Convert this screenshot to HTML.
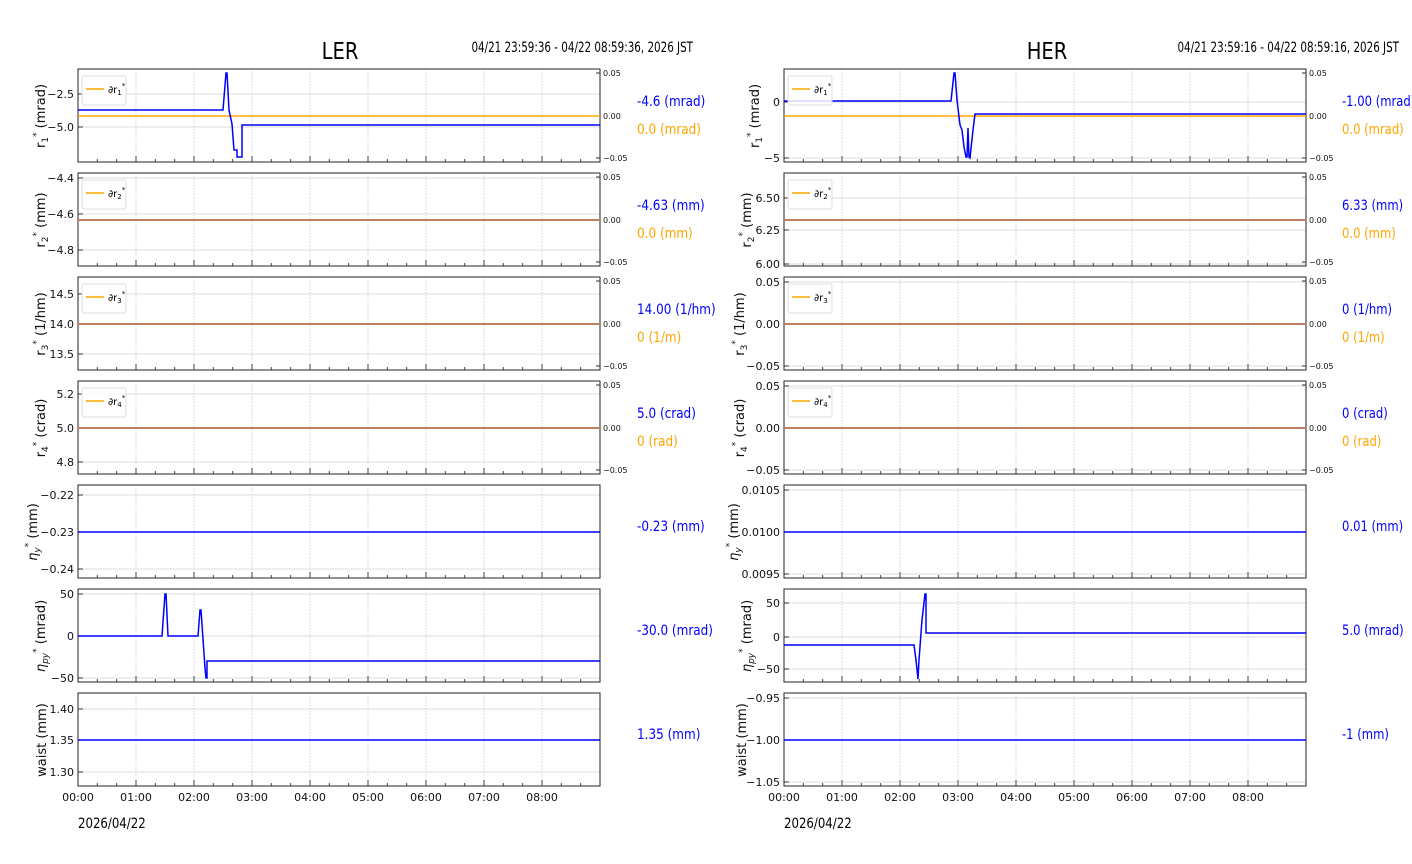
<!DOCTYPE html>
<html><head><meta charset="utf-8"><style>
html,body{margin:0;padding:0;background:#fff;}
svg{display:block;font-family:"DejaVu Sans","Liberation Sans",sans-serif;}
.t{font-size:11px;fill:#111;}
.r{font-size:8px;fill:#111;}
.yl{font-size:13px;fill:#111;}
.v{font-size:14.5px;}
</style></head><body>
<svg width="1412" height="864" viewBox="0 0 1412 864" xmlns="http://www.w3.org/2000/svg">
<defs>
<g id="p">
 <g stroke="#c8c8c8" stroke-width="0.8" stroke-dasharray="1.5,1.5">
  <line x1="58" y1="0" x2="58" y2="93"/><line x1="116" y1="0" x2="116" y2="93"/><line x1="174" y1="0" x2="174" y2="93"/><line x1="232" y1="0" x2="232" y2="93"/><line x1="290" y1="0" x2="290" y2="93"/><line x1="348" y1="0" x2="348" y2="93"/><line x1="406" y1="0" x2="406" y2="93"/><line x1="464" y1="0" x2="464" y2="93"/>
 </g>
 <g stroke="#444" stroke-width="1">
  <path d="M58 93v-6M116 93v-6M174 93v-6M232 93v-6M290 93v-6M348 93v-6M406 93v-6M464 93v-6M19.3 93v-3M38.7 93v-3M77.3 93v-3M96.7 93v-3M135.3 93v-3M154.7 93v-3M193.3 93v-3M212.7 93v-3M251.3 93v-3M270.7 93v-3M309.3 93v-3M328.7 93v-3M367.3 93v-3M386.7 93v-3M425.3 93v-3M444.7 93v-3M483.3 93v-3M502.7 93v-3"/>
 </g>
 <rect x="0" y="0" width="522" height="93" fill="none" stroke="#222" stroke-width="1"/>
</g>
<g id="hg"><line x1="0" y1="0" x2="522" y2="0" stroke="#d0d0d0" stroke-width="0.8"/><line x1="0" y1="0" x2="5" y2="0" stroke="#333"/></g>
<g id="rax"><line x1="0" y1="4" x2="-4" y2="4" stroke="#333"/><line x1="0" y1="47" x2="-4" y2="47" stroke="#333"/><line x1="0" y1="89" x2="-4" y2="89" stroke="#333"/>
 <text class="r" x="3" y="7">0.05</text><text class="r" x="3" y="50">0.00</text><text class="r" x="3" y="92">−0.05</text></g>
<g id="leg"><rect x="0" y="0" width="44" height="29" rx="2" fill="#fff" fill-opacity="0.85" stroke="#ddd"/><line x1="4" y1="13" x2="22" y2="13" stroke="#ffa500" stroke-width="1.5"/></g>
</defs>

<text transform="translate(340,59) scale(0.85,1)" text-anchor="middle" font-size="23">LER</text>
<text transform="translate(693,52) scale(0.74,1)" text-anchor="end" font-size="14">04/21 23:59:36 - 04/22 08:59:36, 2026 JST</text>
<text transform="translate(1047,59) scale(0.85,1)" text-anchor="middle" font-size="23">HER</text>
<text transform="translate(1399,52) scale(0.74,1)" text-anchor="end" font-size="14">04/21 23:59:16 - 04/22 08:59:16, 2026 JST</text>

<!-- LEFT -->
<g>
<use href="#hg" x="78" y="94"/><use href="#hg" x="78" y="127"/>
<use href="#hg" x="78" y="178"/><use href="#hg" x="78" y="214"/><use href="#hg" x="78" y="250"/>
<use href="#hg" x="78" y="294"/><use href="#hg" x="78" y="324"/><use href="#hg" x="78" y="354"/>
<use href="#hg" x="78" y="394"/><use href="#hg" x="78" y="428"/><use href="#hg" x="78" y="462"/>
<use href="#hg" x="78" y="495"/><use href="#hg" x="78" y="532"/><use href="#hg" x="78" y="569"/>
<use href="#hg" x="78" y="594"/><use href="#hg" x="78" y="636"/><use href="#hg" x="78" y="678"/>
<use href="#hg" x="78" y="709"/><use href="#hg" x="78" y="740"/><use href="#hg" x="78" y="772"/>
<use href="#p" x="78" y="69"/><use href="#p" x="78" y="173"/><use href="#p" x="78" y="277"/><use href="#p" x="78" y="381"/><use href="#p" x="78" y="485"/><use href="#p" x="78" y="589"/><use href="#p" x="78" y="693"/>
<use href="#rax" x="600" y="69"/><use href="#rax" x="600" y="173"/><use href="#rax" x="600" y="277"/><use href="#rax" x="600" y="381"/>
<g class="t" text-anchor="end">
<text x="74" y="98">−2.5</text><text x="74" y="131">−5.0</text>
<text x="74" y="182">−4.4</text><text x="74" y="218">−4.6</text><text x="74" y="254">−4.8</text>
<text x="74" y="298">14.5</text><text x="74" y="328">14.0</text><text x="74" y="358">13.5</text>
<text x="74" y="398">5.2</text><text x="74" y="432">5.0</text><text x="74" y="466">4.8</text>
<text x="74" y="499">−0.22</text><text x="74" y="536">−0.23</text><text x="74" y="573">−0.24</text>
<text x="74" y="598">50</text><text x="74" y="640">0</text><text x="74" y="682">−50</text>
<text x="74" y="713">1.40</text><text x="74" y="744">1.35</text><text x="74" y="776">1.30</text>
</g>
<line x1="78" y1="116" x2="600" y2="116" stroke="#ffa500" stroke-width="1.5"/>
<polyline fill="none" stroke="#0000ff" stroke-width="1.5" points="78,110 223,110 226,73 227,73 229,110 232,124 234,150 237,150 237,157 242,157 242,125 600,125"/>
<line x1="78" y1="220" x2="600" y2="220" stroke="#c08060" stroke-width="2"/>
<line x1="78" y1="324" x2="600" y2="324" stroke="#c08060" stroke-width="2"/>
<line x1="78" y1="428" x2="600" y2="428" stroke="#c08060" stroke-width="2"/>
<line x1="78" y1="532" x2="600" y2="532" stroke="#0000ff" stroke-width="1.5"/>
<polyline fill="none" stroke="#0000ff" stroke-width="1.5" points="78,636 162,636 165,594 166,594 168,636 198,636 200,610 201,610 205,668 206,678 207,678 207,661 600,661"/>
<line x1="78" y1="740" x2="600" y2="740" stroke="#0000ff" stroke-width="1.5"/>
<use href="#leg" x="82" y="76"/><use href="#leg" x="82" y="180"/><use href="#leg" x="82" y="284"/><use href="#leg" x="82" y="388"/>
<g font-size="10"><text x="108" y="93">∂r<tspan font-size="7" dy="2">1</tspan><tspan font-size="7" dy="-7">*</tspan></text>
<text x="108" y="197">∂r<tspan font-size="7" dy="2">2</tspan><tspan font-size="7" dy="-7">*</tspan></text>
<text x="108" y="301">∂r<tspan font-size="7" dy="2">3</tspan><tspan font-size="7" dy="-7">*</tspan></text>
<text x="108" y="405">∂r<tspan font-size="7" dy="2">4</tspan><tspan font-size="7" dy="-7">*</tspan></text></g>
<g class="yl" text-anchor="middle">
<text transform="translate(45,116) rotate(-90)">r<tspan font-size="9" dy="3">1</tspan><tspan font-size="9" dy="-9">*</tspan><tspan dy="6"> (mrad)</tspan></text>
<text transform="translate(45,220) rotate(-90)">r<tspan font-size="9" dy="3">2</tspan><tspan font-size="9" dy="-9">*</tspan><tspan dy="6"> (mm)</tspan></text>
<text transform="translate(45,324) rotate(-90)">r<tspan font-size="9" dy="3">3</tspan><tspan font-size="9" dy="-9">*</tspan><tspan dy="6"> (1/hm)</tspan></text>
<text transform="translate(45,428) rotate(-90)">r<tspan font-size="9" dy="3">4</tspan><tspan font-size="9" dy="-9">*</tspan><tspan dy="6"> (crad)</tspan></text>
<text transform="translate(37,532) rotate(-90)"><tspan font-style="italic">η</tspan><tspan font-size="9" dy="3" font-style="italic">y</tspan><tspan font-size="9" dy="-9">*</tspan><tspan dy="6"> (mm)</tspan></text>
<text transform="translate(45,636) rotate(-90)"><tspan font-style="italic">η</tspan><tspan font-size="9" dy="3" font-style="italic">py</tspan><tspan font-size="9" dy="-9">*</tspan><tspan dy="6"> (mrad)</tspan></text>
<text transform="translate(46,740) rotate(-90)">waist (mm)</text>
</g>
<g class="t" text-anchor="middle">
<text x="78" y="801">00:00</text><text x="136" y="801">01:00</text><text x="194" y="801">02:00</text><text x="252" y="801">03:00</text><text x="310" y="801">04:00</text><text x="368" y="801">05:00</text><text x="426" y="801">06:00</text><text x="484" y="801">07:00</text><text x="542" y="801">08:00</text>
</g>
<text transform="translate(78,828) scale(0.84,1)" style="font-size:14px">2026/04/22</text>
<g class="v" transform="translate(637,0) scale(0.83,1)">
<text x="0" y="106" fill="#0000ff">-4.6 (mrad)</text><text x="0" y="134" fill="#ffa500">0.0 (mrad)</text>
<text x="0" y="210" fill="#0000ff">-4.63 (mm)</text><text x="0" y="238" fill="#ffa500">0.0 (mm)</text>
<text x="0" y="314" fill="#0000ff">14.00 (1/hm)</text><text x="0" y="342" fill="#ffa500">0 (1/m)</text>
<text x="0" y="418" fill="#0000ff">5.0 (crad)</text><text x="0" y="446" fill="#ffa500">0 (rad)</text>
<text x="0" y="531" fill="#0000ff">-0.23 (mm)</text>
<text x="0" y="635" fill="#0000ff">-30.0 (mrad)</text>
<text x="0" y="739" fill="#0000ff">1.35 (mm)</text>
</g>
</g>

<!-- RIGHT -->
<g>
<use href="#hg" x="784" y="102"/><use href="#hg" x="784" y="158"/>
<use href="#hg" x="784" y="198"/><use href="#hg" x="784" y="230"/><use href="#hg" x="784" y="264"/>
<use href="#hg" x="784" y="282"/><use href="#hg" x="784" y="324"/><use href="#hg" x="784" y="366"/>
<use href="#hg" x="784" y="386"/><use href="#hg" x="784" y="428"/><use href="#hg" x="784" y="470"/>
<use href="#hg" x="784" y="490"/><use href="#hg" x="784" y="532"/><use href="#hg" x="784" y="574"/>
<use href="#hg" x="784" y="603"/><use href="#hg" x="784" y="637"/><use href="#hg" x="784" y="669"/>
<use href="#hg" x="784" y="698"/><use href="#hg" x="784" y="740"/><use href="#hg" x="784" y="782"/>
<use href="#p" x="784" y="69"/><use href="#p" x="784" y="173"/><use href="#p" x="784" y="277"/><use href="#p" x="784" y="381"/><use href="#p" x="784" y="485"/><use href="#p" x="784" y="589"/><use href="#p" x="784" y="693"/>
<use href="#rax" x="1306" y="69"/><use href="#rax" x="1306" y="173"/><use href="#rax" x="1306" y="277"/><use href="#rax" x="1306" y="381"/>
<g class="t" text-anchor="end">
<text x="780" y="106">0</text><text x="780" y="162">−5</text>
<text x="780" y="202">6.50</text><text x="780" y="234">6.25</text><text x="780" y="268">6.00</text>
<text x="780" y="286">0.05</text><text x="780" y="328">0.00</text><text x="780" y="370">−0.05</text>
<text x="780" y="390">0.05</text><text x="780" y="432">0.00</text><text x="780" y="474">−0.05</text>
<text x="780" y="494">0.0105</text><text x="780" y="536">0.0100</text><text x="780" y="578">0.0095</text>
<text x="780" y="607">50</text><text x="780" y="641">0</text><text x="780" y="673">−50</text>
<text x="780" y="702">−0.95</text><text x="780" y="744">−1.00</text><text x="780" y="786">−1.05</text>
</g>
<line x1="784" y1="116" x2="1306" y2="116" stroke="#ffa500" stroke-width="1.5"/>
<polyline fill="none" stroke="#0000ff" stroke-width="1.5" points="784,101 951,101 954,73 955,73 957,100 960,125 962,130 964,147 966,157 967,157 968,128 969,157 970,158 973,130 975,114 1306,114"/>
<line x1="784" y1="220" x2="1306" y2="220" stroke="#c08060" stroke-width="2"/>
<line x1="784" y1="324" x2="1306" y2="324" stroke="#c08060" stroke-width="2"/>
<line x1="784" y1="428" x2="1306" y2="428" stroke="#c08060" stroke-width="2"/>
<line x1="784" y1="532" x2="1306" y2="532" stroke="#0000ff" stroke-width="1.5"/>
<polyline fill="none" stroke="#0000ff" stroke-width="1.5" points="784,645 914,645 916,660 918,679 919,660 922,620 925,594 926,594 926,633 1306,633"/>
<line x1="784" y1="740" x2="1306" y2="740" stroke="#0000ff" stroke-width="1.5"/>
<use href="#leg" x="788" y="76"/><use href="#leg" x="788" y="180"/><use href="#leg" x="788" y="284"/><use href="#leg" x="788" y="388"/>
<g font-size="10"><text x="814" y="93">∂r<tspan font-size="7" dy="2">1</tspan><tspan font-size="7" dy="-7">*</tspan></text>
<text x="814" y="197">∂r<tspan font-size="7" dy="2">2</tspan><tspan font-size="7" dy="-7">*</tspan></text>
<text x="814" y="301">∂r<tspan font-size="7" dy="2">3</tspan><tspan font-size="7" dy="-7">*</tspan></text>
<text x="814" y="405">∂r<tspan font-size="7" dy="2">4</tspan><tspan font-size="7" dy="-7">*</tspan></text></g>
<g class="yl" text-anchor="middle">
<text transform="translate(759,116) rotate(-90)">r<tspan font-size="9" dy="3">1</tspan><tspan font-size="9" dy="-9">*</tspan><tspan dy="6"> (mrad)</tspan></text>
<text transform="translate(751,220) rotate(-90)">r<tspan font-size="9" dy="3">2</tspan><tspan font-size="9" dy="-9">*</tspan><tspan dy="6"> (mm)</tspan></text>
<text transform="translate(744,324) rotate(-90)">r<tspan font-size="9" dy="3">3</tspan><tspan font-size="9" dy="-9">*</tspan><tspan dy="6"> (1/hm)</tspan></text>
<text transform="translate(744,428) rotate(-90)">r<tspan font-size="9" dy="3">4</tspan><tspan font-size="9" dy="-9">*</tspan><tspan dy="6"> (crad)</tspan></text>
<text transform="translate(738,532) rotate(-90)"><tspan font-style="italic">η</tspan><tspan font-size="9" dy="3" font-style="italic">y</tspan><tspan font-size="9" dy="-9">*</tspan><tspan dy="6"> (mm)</tspan></text>
<text transform="translate(751,636) rotate(-90)"><tspan font-style="italic">η</tspan><tspan font-size="9" dy="3" font-style="italic">py</tspan><tspan font-size="9" dy="-9">*</tspan><tspan dy="6"> (mrad)</tspan></text>
<text transform="translate(746,740) rotate(-90)">waist (mm)</text>
</g>
<g class="t" text-anchor="middle">
<text x="784" y="801">00:00</text><text x="842" y="801">01:00</text><text x="900" y="801">02:00</text><text x="958" y="801">03:00</text><text x="1016" y="801">04:00</text><text x="1074" y="801">05:00</text><text x="1132" y="801">06:00</text><text x="1190" y="801">07:00</text><text x="1248" y="801">08:00</text>
</g>
<text transform="translate(784,828) scale(0.84,1)" style="font-size:14px">2026/04/22</text>
<g class="v" transform="translate(1342,0) scale(0.8,1)">
<text x="0" y="106" fill="#0000ff">-1.00 (mrad)</text><text x="0" y="134" fill="#ffa500">0.0 (mrad)</text>
<text x="0" y="210" fill="#0000ff">6.33 (mm)</text><text x="0" y="238" fill="#ffa500">0.0 (mm)</text>
<text x="0" y="314" fill="#0000ff">0 (1/hm)</text><text x="0" y="342" fill="#ffa500">0 (1/m)</text>
<text x="0" y="418" fill="#0000ff">0 (crad)</text><text x="0" y="446" fill="#ffa500">0 (rad)</text>
<text x="0" y="531" fill="#0000ff">0.01 (mm)</text>
<text x="0" y="635" fill="#0000ff">5.0 (mrad)</text>
<text x="0" y="739" fill="#0000ff">-1 (mm)</text>
</g>
</g>
</svg>
</body></html>
